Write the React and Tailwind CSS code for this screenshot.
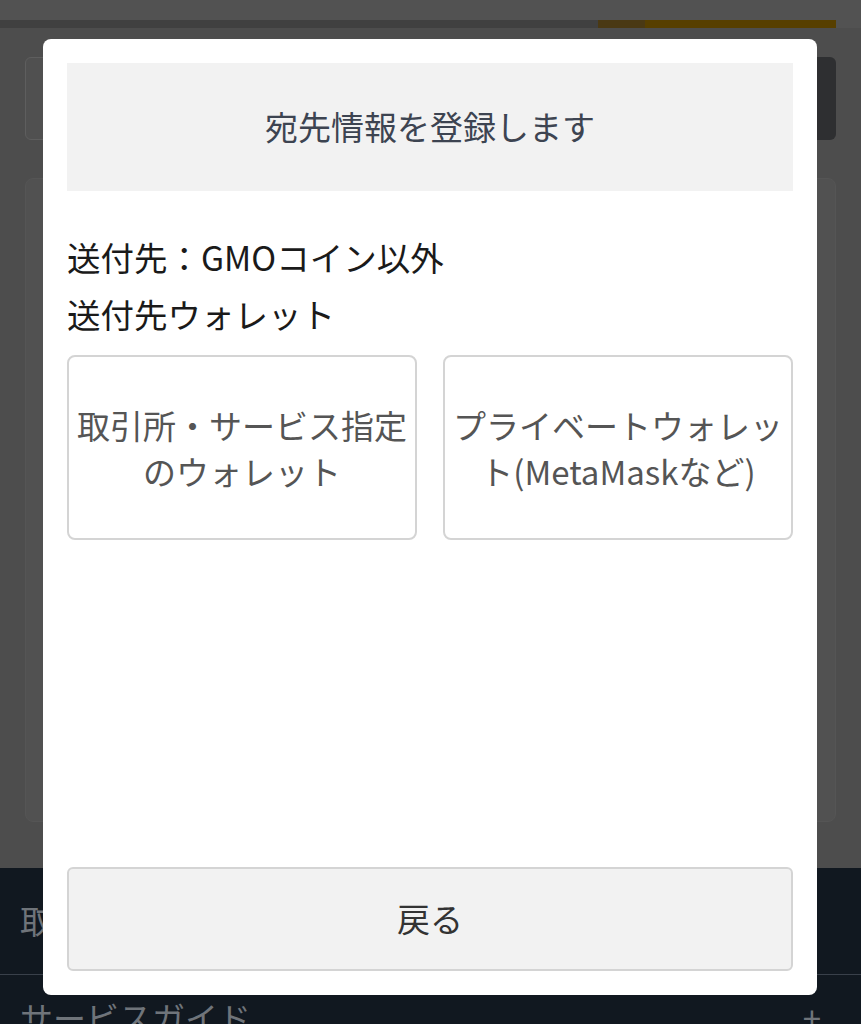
const font = { fontFamily: '"Noto Sans CJK JP", "Noto Sans", sans-serif' }

const Backdrop = () => (
  <div className="w-full h-[1024px] flex flex-col bg-[#4d4d4d] overflow-hidden">
    {/* top strip */}
    <div className="h-[20px] shrink-0 bg-[#525252]" />
    <div className="h-[8px] shrink-0 flex pr-[25px] bg-[#525252]">
      <div className="flex-1 bg-[#404040]" />
      <div className="w-[47px] bg-[#4a3914]" />
      <div className="w-[191px] bg-[#573f00]" />
    </div>

    {/* dimmed page body */}
    <div className="h-[840px] shrink-0 px-[25px] pt-[29px] flex flex-col">
      <div className="flex gap-3 h-[83px]">
        <div className="flex-1 rounded-[6px] border border-[#5e5e5e] bg-[#505050]" />
        <div className="w-[46px] rounded-[6px] bg-[#2e2f31]" />
      </div>
      <div className="mt-[38px] h-[644px] rounded-[8px] border border-[#555] bg-[#515151]" />
    </div>

    {/* dark footer */}
    <div className="flex-1 bg-[#111820] flex flex-col">
      <div className="h-[107px] shrink-0 flex items-center px-[20px] border-b border-[#39404a]">
        <span className="text-[33px] text-[#6f747a]" style={font}>取引</span>
      </div>
      <div className="flex items-start justify-between px-[20px] pt-[18px]">
        <span className="text-[33px] text-[#6f747a]" style={font}>サービスガイド</span>
        <span className="text-[33px] text-[#6f747a] mr-[20px]" style={font}>+</span>
      </div>
    </div>
  </div>
)

const Choice = ({ children }) => (
  <button className="flex-1 h-[185px] rounded-[8px] border-2 border-[#d4d4d4] bg-white px-[6px] flex items-center justify-center text-center text-[33px] leading-[46px] text-[#555]">
    {children}
  </button>
)

export default function App() {
  return (
    <div className="relative w-full h-[1024px]" style={font}>
      <Backdrop />

      <div className="absolute left-[43px] top-[39px] w-[774px] h-[956px] bg-white rounded-[8px] p-[24px] flex flex-col">
        <div className="h-[128px] bg-[#f2f2f2] flex items-center justify-center">
          <span className="text-[33px] text-[#3d4451]">宛先情報を登録します</span>
        </div>

        <div className="mt-[37px] text-[33.5px] leading-[57px] text-[#1a1a1a]">
          <div>送付先：GMOコイン以外</div>
          <div>送付先ウォレット</div>
        </div>

        <div className="mt-[13px] flex gap-[26px]">
          <Choice>取引所・サービス指定のウォレット</Choice>
          <Choice>プライベートウォレット(MetaMaskなど)</Choice>
        </div>

        <button className="mt-auto h-[104px] w-full rounded-[6px] border-2 border-[#d4d4d4] bg-[#f2f2f2] text-[33px] text-[#333]">
          戻る
        </button>
      </div>
    </div>
  )
}
